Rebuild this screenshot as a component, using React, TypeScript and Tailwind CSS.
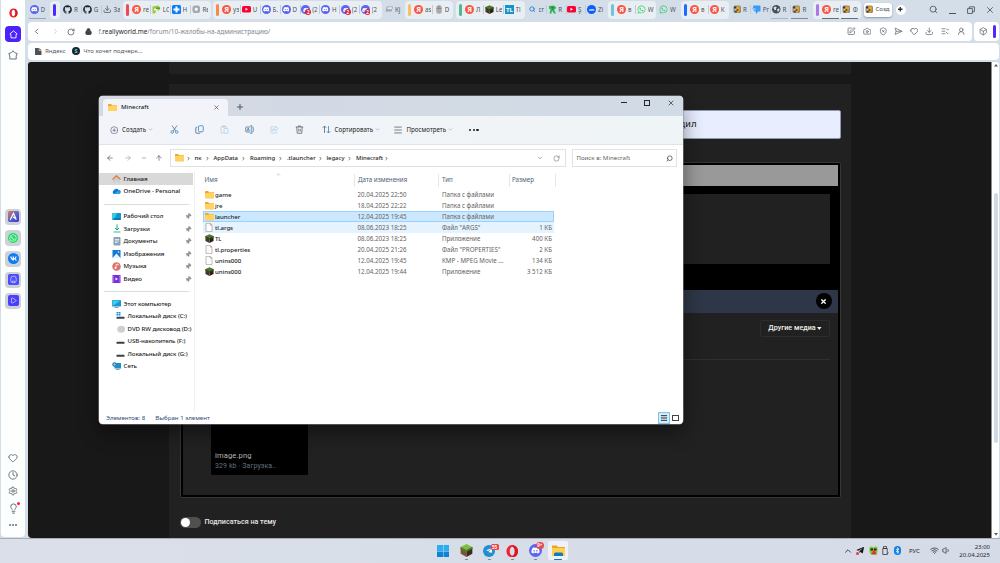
import React from "react";
import {
  ArrowLeft, ArrowRight, ArrowUp, Box, Camera, ChevronDown, ChevronLeft, ChevronRight, ChevronUp,
  CirclePlus, Clock, Download, Heart, Lightbulb, ListChecks, Lock, Menu, Pin, Play, RotateCw,
  Search, SendHorizontal, Settings, ShieldX, SquarePen, UserRound, Volume1, Wifi, X,
} from "lucide-react";
import { FaBluetoothB, FaDiscord, FaGithub, FaTelegramPlane, FaVk, FaWhatsapp } from "react-icons/fa";

/* ---------- small drawings ---------- */

const Cube = ({ cls = "size-[9px]" }: { cls?: string }) => (
  <svg viewBox="0 0 12 12" className={cls}>
    <path d="M6 0 11.4 2.8 6 5.6.6 2.8Z" fill="#7cc043" />
    <path d="M.6 2.8 6 5.6V12L.6 9Z" fill="#7a5436" />
    <path d="M11.4 2.8 6 5.6V12l5.4-3Z" fill="#3f2a1c" />
    <path d="M.6 2.8 6 5.6v2L4.5 6 3 6.3 2 4.8l-1.4.4ZM11.4 2.8 6 5.6v2L7.6 6l1.6-.2.8-1.3 1.4.3Z" fill="#4c8a28" />
  </svg>
);

const DarkCube = ({ cls = "size-[9px]" }: { cls?: string }) => (
  <svg viewBox="0 0 12 12" className={cls}>
    <path d="M6 .3 11.4 2.6 6 5.4.6 2.6Z" fill="#4a7a2c" />
    <path d="M.6 2.6 6 5.4V12L.6 9.2Z" fill="#4a3424" />
    <path d="M11.4 2.6 6 5.4V12l5.4-2.8Z" fill="#2c1e16" />
    <path d="M.6 2.6 6 5.4v2L4 5.6 3 6.3.6 4.6ZM11.4 2.6 6 5.4v2L8 5.6l1 .7 2.4-1.7Z" fill="#30521d" />
  </svg>
);

const Folder = ({ cls = "h-[7.500px] w-[9px]" }: { cls?: string }) => (
  <svg viewBox="0 0 18 15" className={cls}>
    <path d="M0 1.5Q0 0 1.5 0H6l2 2h8.5Q18 2 18 3.5V13q0 1.5-1.5 1.5h-15Q0 14.500 0 13Z" fill="#e9a92d" />
    <path d="M0 5.500Q0 4 1.500 4H7l1.500-1.500h8Q18 2.500 18 4v9q0 1.500-1.500 1.500h-15Q0 14.500 0 13Z" fill="#ffd262" />
  </svg>
);

const Doc = () => (
  <svg viewBox="0 0 16 18" className="h-[9px] w-[8px]">
    <path d="M2 .7h8.500L14 4.200v13H2Z" fill="#fdfdfd" stroke="#8e8e8e" strokeWidth="1.200" />
    <path d="M10.500.7v3.500H14" fill="none" stroke="#8e8e8e" strokeWidth="1.200" />
  </svg>
);

const OperaMark = ({ cls }: { cls: string }) => (
  <svg viewBox="0 0 20 20" className={cls}>
    <path fillRule="evenodd" d="M10 0c5.500 0 9.300 4.500 9.300 10S15.500 20 10 20 .7 15.500.7 10 4.500 0 10 0Zm0 2.800c-2.500 0-4 3.500-4 7.200s1.500 7.200 4 7.200 4-3.500 4-7.200-1.500-7.200-4-7.200Z" fill="#f5202f" />
    <path d="M13 1.200c4 1.300 6.300 4.800 6.300 8.800s-2.300 7.500-6.300 8.800c-1.500.4-3-.2-4-1.300 3 .5 5-3.500 5-7.500s-2-8-5-7.500c1-1.100 2.500-1.700 4-1.300Z" fill="#b8101f" opacity=".5" />
  </svg>
);

const Ya = () => (
  <span className="flex size-[9px] items-center justify-center rounded-full bg-[#fc5442] text-[7px] font-bold leading-none text-white">Я</span>
);
const Disc = () => (
  <span className="flex size-[9px] items-center justify-center rounded-full bg-[#5865f2]">
    <FaDiscord className="size-[6.500px] text-white" />
  </span>
);
const DiscRed = () => (
  <span className="relative flex size-[9px] items-center justify-center rounded-full bg-[#5865f2]">
    <FaDiscord className="size-[6px] text-white" />
    <span className="absolute -bottom-[0.500px] -right-[0.500px] flex size-[5.500px] items-center justify-center rounded-full bg-[#d9213b] text-[4.500px] font-bold leading-none text-white">2</span>
  </span>
);
const Tube = () => (
  <svg viewBox="0 0 18 13" className="h-[6.500px] w-[9px]">
    <rect width="18" height="13" rx="3" fill="#fb0033" />
    <path d="m7 3.500 5 3-5 3Z" fill="#fff" />
  </svg>
);
const Bee = () => (
  <svg viewBox="0 0 16 16" className="size-[8.500px]">
    <rect x="1" y="1" width="14" height="14" rx="3" fill="#8d857c" />
    <path d="M6 3h7v6l-2 5H6Z" fill="#e9a424" />
    <path d="M2 3h4v3H2ZM7 8h3v3H7ZM4 11h3v3H4Z" fill="#3b3636" />
    <path d="M3 8h3v2H3Z" fill="#e8e2d8" />
  </svg>
);
const Mouse = () => (
  <svg viewBox="0 0 12 18" className="h-[9px] w-[6px]">
    <rect x=".5" y=".5" width="11" height="17" rx="5" fill="#a9a9a9" />
    <path d="M6 1v6M1 7h10" stroke="#6f6f6f" />
  </svg>
);
const Roblox = () => (
  <svg viewBox="0 0 18 18" className="size-[9px]">
    <path d="M2 2l9-1 5 3-1 4-3 1 4 8h-4l-4-6-1 6H3l2-8-3-2Z" fill="#2fb457" />
    <path d="M7 5h4M8 8h3" stroke="#136b31" strokeWidth="1.500" />
  </svg>
);
const Zoomy = () => (
  <span className="flex size-[9px] items-center justify-center rounded-full bg-[#0b5cff] text-[3.500px] font-bold leading-none text-white">zm</span>
);
const Whats = () => <FaWhatsapp className="size-[9px] text-[#2fcf63]" />;
const GlobeDark = () => (
  <svg viewBox="0 0 18 18" className="size-[8.500px]">
    <circle cx="9" cy="9" r="9" fill="#47505a" />
    <path d="M3 6l4-3 3 2-2 3 1 2-3 1ZM11 9l4-2 1 4-4 4Z" fill="#dfe5ea" />
  </svg>
);
const Drop = () => (
  <svg viewBox="0 0 18 18" className="size-[9px]">
    <path d="M3 1h13q1 0 1 1v10q0 1-1 1h-4l-3 5-2-5-3-1-1-3-2-1Z" fill="#389bf5" />
    <path d="M1 6h6v5H5Z" fill="#7cc4ff" />
  </svg>
);

/* ---------- browser tabs ---------- */

type Tab = { icon: React.ReactNode; text: string; line?: string };
type Group = { box: string; bar?: string; tabs: Tab[] };

const groups: Group[] = [
  { box: "w-[21px] pl-[0.500px]", tabs: [{ icon: <Disc />, text: "D", line: "bg-[#9aa6b3]" }] },
  { box: "w-[10px] bg-[#e9eef3]", bar: "bg-[#5028ff]", tabs: [] },
  { box: "w-[63px] pl-[3px]", tabs: [
    { icon: <FaGithub className="size-[9px] text-[#1d2329]" />, text: "R" },
    { icon: <FaGithub className="size-[9px] text-[#1d2329]" />, text: "G" },
    { icon: <Download className="size-[8.500px] text-[#444b52]" />, text: "За" },
  ] },
  { box: "w-[88px] bg-[#e9eef3]", bar: "bg-[#ec4a5c]", tabs: [
    { icon: <Ya />, text: "re" },
    { icon: <svg viewBox="0 0 18 18" className="size-[9px]"><path d="M1 3 13 1l4 5-3 5H9l-3 6H1Z" fill="#9acb3c" /><path d="M4 7h7v4H4Z" fill="#f4f7ee" /><path d="M8 5h8v3H8Z" fill="#5f9a2a" /></svg>, text: "LC" },
    { icon: <svg viewBox="0 0 18 18" className="size-[9px]"><rect width="18" height="18" rx="3" fill="#0a7cf5" /><path d="M7 3h4v4h4v4h-4v4H7v-4H3V7h4Z" fill="#fff" /></svg>, text: "Н" },
    { icon: <svg viewBox="0 0 18 18" className="size-[8.500px]"><rect x="1" y="1" width="16" height="16" rx="5" fill="#a3abb5" /><rect x="5" y="5" width="8" height="8" rx="2" fill="#f3f4f6" stroke="#6f7782" /></svg>, text: "Re" },
  ] },
  { box: "w-[169px] bg-[#e9eef3] ml-[2px]", bar: "bg-[#f28b4b]", tabs: [
    { icon: <Ya />, text: "уз" },
    { icon: <Tube />, text: "U" },
    { icon: <Disc />, text: "Б." },
    { icon: <Disc />, text: "D" },
    { icon: <DiscRed />, text: "(2" },
    { icon: <Disc />, text: "H" },
    { icon: <DiscRed />, text: "(2" },
    { icon: <DiscRed />, text: "(2" },
  ] },
  { box: "w-[22px] pl-[2px]", tabs: [{ icon: <svg viewBox="0 0 18 18" className="size-[8.500px]"><path d="M4 3h13l-3 11H1Z" fill="#9ea7ae" /><path d="M6 5h9l-1 4H5Z" fill="#e8edf0" /></svg>, text: "Кj" }] },
  { box: "w-[48px] bg-[#e9eef3] ml-[1px]", bar: "bg-[#f3c168]", tabs: [{ icon: <Ya />, text: "as" }, { icon: <Mouse />, text: "D" }] },
  { box: "w-[69px] bg-[#e9eef3] ml-[3px]", bar: "bg-[#4cba8c]", tabs: [
    { icon: <Ya />, text: "Л" },
    { icon: <DarkCube />, text: "Le" },
    { icon: <span className="flex h-[8.500px] w-[9px] items-center justify-center bg-[#1495c8] text-[6px] font-bold leading-none text-white">TL</span>, text: "Tl" },
  ] },
  { box: "w-[82px] pl-[1.500px] ml-[1px]", tabs: [
    { icon: <Search className="size-[6.500px] text-[#1d75d8]" strokeWidth={3} />, text: "cr" },
    { icon: <Roblox />, text: "R" },
    { icon: <Tube />, text: "Ş" },
    { icon: <Zoomy />, text: "Zi" },
  ] },
  { box: "w-[48px] bg-[#e9eef3]", bar: "bg-[#6cc5dc]", tabs: [{ icon: <Ya />, text: "в" }, { icon: <Whats />, text: "W" }] },
  { box: "w-[24px] pl-[3px]", tabs: [{ icon: <Whats />, text: "W" }] },
  { box: "w-[48px] bg-[#e9eef3] ml-[1px]", bar: "bg-[#1c6cff]", tabs: [{ icon: <Ya />, text: "в" }, { icon: <Ya />, text: "К" }] },
  { box: "w-[83px] pl-[3px]", tabs: [
    { icon: <Bee />, text: "R" },
    { icon: <Drop />, text: "Pr" },
    { icon: <GlobeDark />, text: "R", line: "bg-[#a9b5c1]" },
    { icon: <Bee />, text: "R", line: "bg-[#7d8a99]" },
  ] },
  { box: "w-[48px] bg-[#e9eef3] ml-[1px]", bar: "bg-[#ab79e6]", tabs: [
    { icon: <Ya />, text: "re", line: "bg-[#66707d]" },
    { icon: <Bee />, text: "Ф", line: "bg-[#66707d]" },
  ] },
];

const TabStrip = () => (
  <div className="flex h-[21px] items-start pl-[0.500px] pt-[0.500px] text-[6.200px] text-[#4b535c]">
    {groups.map((g, i) => (
      <div key={i} className={"flex h-[18px] shrink-0 items-center rounded-[4px] " + g.box}>
        {g.bar && <span className={"ml-[3.500px] mr-[2.500px] h-[12px] w-[3px] shrink-0 rounded-full " + g.bar} />}
        {g.tabs.map((t, j) => (
          <div key={j} className="relative flex h-full w-[19.800px] shrink-0 items-center">
            {j > 0 && <span className="absolute -left-px h-[9px] w-px bg-[#c3ccd5]" />}
            <span className="ml-[0.500px] flex w-[9.500px] shrink-0 items-center justify-center">{t.icon}</span>
            <span className="ml-[1.500px] w-[6px] overflow-hidden whitespace-nowrap leading-[9px]">{t.text}</span>
            {t.line && <span className={"absolute bottom-0 left-0 h-px w-[17px] " + t.line} />}
          </div>
        ))}
      </div>
    ))}
    <div className="ml-[3px] mt-[2px] flex h-[14px] w-[28px] shrink-0 items-center rounded-[3px] bg-white pl-[1.500px] shadow-[0_1px_2px_#8d99a5]">
      <Bee />
      <span className="ml-[2px] w-[14px] whitespace-nowrap text-[6px] leading-[9px]">Созд</span>
    </div>
    <span className="ml-[4px] mt-[4px] flex size-[10px] shrink-0 items-center justify-center rounded-full bg-white text-[#333]">
      <svg viewBox="0 0 10 10" className="size-[4.500px]" stroke="currentColor" strokeWidth="3"><path d="M5 0v10M0 5h10" /></svg>
    </span>
    <div className="ml-auto mr-[5px] mt-[4px] flex items-center text-[#4b545c]">
      <Search className="size-[9px]" strokeWidth={2.200} />
      <span className="ml-[11px] mt-[7px] h-px w-[7px] bg-[#4b545c]" />
      <svg viewBox="0 0 14 14" className="ml-[11px] size-[8px]" fill="none" stroke="currentColor" strokeWidth="1.500"><path d="M1 4.500h8.500V13H1ZM4 4.500V1.500h9V10H9.500" /></svg>
      <X className="ml-[10px] size-[10px]" strokeWidth={2} />
    </div>
  </div>
);

/* ---------- browser chrome ---------- */

const SideTile = ({ children }: { children: React.ReactNode }) => (
  <span className="flex size-[16px] items-center justify-center rounded-[4px] bg-[#cdd2d6]">{children}</span>
);

const SideBar = () => (
  <div className="ml-px mr-[3px] flex h-[537px] w-[24px] shrink-0 flex-col items-center rounded-b-[4px] bg-[#fdfefe] text-[#5a636b]">
    <div className="mt-[8px]"><OperaMark cls="h-[10px] w-[9px]" /></div>
    <div className="mt-[8px] flex size-[16px] items-center justify-center rounded-[4px] bg-[#4c22fb] text-white">
      <svg viewBox="0 0 16 16" className="size-[9px]" fill="none" stroke="currentColor" strokeWidth="1.600"><path d="M1.500 7 8 1.500 14.500 7l-2 1v6h-9V8Z" strokeLinejoin="round" /></svg>
    </div>
    <svg viewBox="0 0 20 20" className="mt-[7.500px] size-[10px]" fill="none" stroke="currentColor" strokeWidth="1.800" strokeLinejoin="round"><path d="m10 1.500 3 3.700 5.500 2-2.200 4.800.2 6H3.500l.2-6L1.500 7.200l5.500-2Z" /></svg>
    <div className="mt-[149px] flex flex-col gap-[5px]">
      <SideTile>
        <svg viewBox="0 0 20 20" className="size-[11px]">
          <defs><linearGradient id="aria" x1="0" y1="0" x2="1" y2="1"><stop offset="0" stopColor="#f0744f" /><stop offset=".5" stopColor="#5b63c9" /><stop offset="1" stopColor="#3b33d6" /></linearGradient></defs>
          <rect width="20" height="20" rx="3" fill="url(#aria)" />
          <path d="m4 16 6-12 5 12M9 11l4 2" fill="none" stroke="#fff" strokeWidth="2.200" />
        </svg>
      </SideTile>
      <SideTile><span className="flex size-[10px] items-center justify-center rounded-full bg-[#21db66]"><FaWhatsapp className="size-[8px] text-white" /></span></SideTile>
      <SideTile><span className="flex size-[11px] items-center justify-center rounded-full bg-[#0f7cf7]"><FaVk className="size-[7px] text-white" /></span></SideTile>
      <SideTile>
        <svg viewBox="0 0 20 20" className="size-[11px]">
          <rect width="20" height="20" rx="3" fill="#4d4dfb" />
          <rect x="5" y="4" width="10" height="12" rx="4.500" fill="none" stroke="#cfc9ff" strokeWidth="1.400" />
          <path d="M8 9h.5m3 0h.5M8 16v-3h4v3" fill="none" stroke="#cfc9ff" strokeWidth="1.400" />
        </svg>
      </SideTile>
      <SideTile><span className="flex size-[11px] items-center justify-center rounded-[2px] bg-[#4a40fb]"><Play className="size-[7px] text-[#d8d4ff]" strokeWidth={2.500} /></span></SideTile>
    </div>
    <div className="mt-auto flex flex-col items-center gap-[6.800px]">
      <Heart className="size-[10px]" strokeWidth={2} />
      <Clock className="size-[10px]" strokeWidth={2} />
      <Settings className="size-[10px]" strokeWidth={2} />
      <span className="relative">
        <Lightbulb className="size-[11px]" strokeWidth={2} />
        <span className="absolute -right-[1px] -top-[1px] size-[3px] rounded-full bg-[#ff1840]" />
      </span>
      <span className="mb-[11px] mt-[3px] flex gap-[1.300px]">
        <i className="size-[2px] bg-[#8b9298]" /><i className="size-[2px] bg-[#8b9298]" /><i className="size-[2px] bg-[#8b9298]" />
      </span>
    </div>
  </div>
);

const AddressBar = () => (
  <div className="mt-px flex h-[19px] gap-[2px] pr-px">
    <div className="flex w-[944px] items-center rounded-[4px] bg-white text-[#59616a]">
      <ChevronLeft className="ml-[4px] size-[9px]" strokeWidth={2.200} />
      <ChevronRight className="ml-[9.500px] size-[9px] text-[#c9ced3]" strokeWidth={2.200} />
      <RotateCw className="ml-[7.500px] size-[8px]" strokeWidth={2.400} />
      <Lock className="ml-[10px] size-[7px] text-[#3b4249]" fill="currentColor" strokeWidth={3} />
      <span className="ml-[6.500px] whitespace-nowrap pt-[1.500px] text-[6.440px] leading-none text-[#7f8890]">f.<span className="text-[#24292e]">reallyworld.me</span>/forum/10-жалобы-на-администрацию/</span>
      <div className="ml-auto mr-[7px] flex items-center gap-[7.100px]">
        <SquarePen className="size-[8.500px]" />
        <Camera className="size-[8.500px]" />
        <ShieldX className="size-[8.500px]" />
        <SendHorizontal className="size-[8.500px]" />
        <Heart className="size-[8.500px]" strokeWidth={2.300} />
        <Download className="size-[8.500px]" />
        <ListChecks className="size-[8.500px] -scale-x-100" />
        <UserRound className="size-[8.500px]" />
      </div>
    </div>
    <div className="flex flex-1 items-center rounded-[4px] bg-white">
      <Box className="ml-[4.500px] size-[8.500px] text-[#59616a]" />
      <span className="ml-[6px] h-[13px] w-[3px] rounded-full bg-[#5028ff]" />
    </div>
  </div>
);

const Bookmarks = () => (
  <div className="mr-px mt-[1.500px] flex h-[17.500px] items-center rounded-[4px] bg-white pl-[7px] text-[6.050px] leading-none text-[#50585f]">
    <svg viewBox="0 0 12 14" className="h-[7.500px] w-[6.500px]"><path d="M0 0h7v5h5v9H0Z" fill="#4b5259" /><path d="m8 0 4 4H8Z" fill="#4b5259" /></svg>
    <span className="ml-[3.500px] w-[20.500px] whitespace-nowrap pt-[0.500px]">Яндекс</span>
    <span className="ml-[6.500px] flex size-[8px] items-center justify-center rounded-full bg-[#13282e] text-[5.500px] font-bold text-[#7fd4d8]">S</span>
    <span className="ml-[3.500px] whitespace-nowrap pt-[0.500px]">Что хочет подчерк...</span>
  </div>
);

/* ---------- forum page ---------- */

const ForumPage = () => (
  <div className="flex h-[475.500px] flex-1 overflow-hidden rounded-bl-[4px] rounded-tl-[3px] bg-[#181818] pl-[141px]">
    <div className="flex w-[682px] flex-col">
      <div className="h-[11.500px] bg-[#212121]" />
      <div className="mt-[10.500px] flex flex-1 flex-col bg-[#212121] pl-[11px] pr-[10px] pt-[26px]">
        <div className="flex h-[28.500px] shrink-0 items-center rounded-[2px] border border-[#8f98a8] bg-[#e8eeff] pl-[467.500px] text-[9.700px] text-[#2b2b2b] [font-family:Roboto,sans-serif]">
          <span className="w-[48px] text-right">убедил</span>
        </div>
        <div className="mt-[23px] flex h-[336px] shrink-0 flex-col rounded-[2px] border border-[#343638] bg-black p-[2px]">
          <div className="h-[21px] shrink-0 bg-[#999999]" />
          <div className="mx-[8px] mt-[8px] h-[70px] shrink-0 bg-[#212121]" />
          <div className="mt-[26px] flex h-[23px] shrink-0 items-center justify-end bg-[#2e3747] pr-[6.500px]">
            <span className="flex size-[16px] items-center justify-center rounded-full bg-black"><X className="size-[7px] text-white" strokeWidth={4.500} /></span>
          </div>
          <div className="flex flex-1 flex-col bg-[#212121] px-[8px] pt-[7px]">
            <div className="flex justify-end border-b border-[#303030] pb-[22px]">
              <span className="flex h-[17px] w-[70px] items-center justify-center gap-[1.500px] whitespace-nowrap rounded-[2px] border border-[#2d2d2d] pt-[1px] text-[7.200px] font-medium text-[#f0f0f0] [font-family:Roboto,sans-serif]">
                Другие медиа
                <svg viewBox="0 0 8 5" className="h-[3px] w-[4.500px]"><path d="M0 0h8L4 5Z" fill="#f0f0f0" /></svg>
              </span>
            </div>
            <div className="ml-[20px] mt-[18px] flex h-[97px] w-[97px] flex-col justify-end gap-[2px] rounded-[1px] bg-black pb-[4.500px] pl-[4px] text-[7.600px] leading-[8px] tracking-[0.100px] [font-family:Roboto,sans-serif]">
              <span className="text-[#b5b5b5]">image.png</span>
              <span className="text-[7px] text-[#61707f]">329 kb · Загрузка..</span>
            </div>
          </div>
        </div>
        <div className="mt-[19.500px] flex items-center">
          <span className="flex h-[11px] w-[21px] items-center rounded-full bg-[#505050] pl-[0.500px]"><i className="size-[9px] rounded-full bg-white" /></span>
          <span className="ml-[3.500px] whitespace-nowrap text-[7.150px] font-medium text-[#e6e6e6] [font-family:Roboto,sans-serif]">Подписаться на тему</span>
        </div>
      </div>
    </div>
  </div>
);

const ScrollBar = () => (
  <div className="mr-px flex h-[475.500px] w-[8px] flex-col items-center rounded-r-[3px] border-l border-[#8c8c8c] bg-white">
    <svg viewBox="0 0 8 5" className="mt-[2px] h-[2.500px] w-[4px]"><path d="m0 5 4-5 4 5Z" fill="#555" /></svg>
    <span className="mt-[126px] h-[250px] w-[4px] rounded-full bg-[#d0dae4]" />
    <svg viewBox="0 0 8 5" className="mb-[2px] mt-auto h-[2.500px] w-[4px]"><path d="m0 0 4 5 4-5Z" fill="#555" /></svg>
  </div>
);

/* ---------- file explorer ---------- */

const MonitorIcon = () => (
  <svg viewBox="0 0 18 16" className="h-[8px] w-[9px]"><rect width="18" height="13" rx="1" fill="#1b95cf" /><path d="M1 1h16L1 12Z" fill="#3fd0e8" /><path d="M5 15h8" stroke="#6c7a84" strokeWidth="1.500" /></svg>
);
const Drive = ({ sys = false }: { sys?: boolean }) => (
  <svg viewBox="0 0 18 16" className="h-[8px] w-[9px]">
    {sys && <path d="M1 0h3.500v3H1ZM5.500 0H9v3H5.500ZM1 4h3.500v3H1ZM5.500 4H9v3H5.500Z" fill="#1488d8" />}
    <path d="M3 8h12l2 2H1Z" fill="#c8cbce" /><rect x="1" y="10" width="16" height="3.500" fill="#3c4146" />
  </svg>
);

type NavItem = { icon: React.ReactNode; text: string; row?: string; pin?: boolean };
const quick: NavItem[] = [
  { icon: <svg viewBox="0 0 18 14" className="h-[7px] w-[9px]"><rect width="18" height="14" rx="1" fill="#1295cf" /><path d="M0 0h10L4 14H0Z" fill="#35cce4" /><path d="M2 11h14v2H2Z" fill="#0b5f94" /></svg>, text: "Рабочий стол", pin: true },
  { icon: <svg viewBox="0 0 16 18" className="h-[9px] w-[8px]" fill="none" stroke="#18a98a" strokeWidth="2"><path d="M8 1v11M4 8l4 4 4-4" /><path d="M1 16h14" stroke="#3fb79d" /></svg>, text: "Загрузки", pin: true },
  { icon: <svg viewBox="0 0 16 18" className="h-[9px] w-[8px]"><rect x="1" width="14" height="17" rx="2" fill="#8aa3bd" /><path d="M4 5h8M4 8h8M4 11h5" stroke="#fff" strokeWidth="1.500" /></svg>, text: "Документы", pin: true },
  { icon: <svg viewBox="0 0 18 16" className="h-[8px] w-[9px]"><rect x="1" width="16" height="16" rx="1" fill="#1878cf" /><path d="m1 16 8-9 8 9Z" fill="#e6f4ff" /><circle cx="13" cy="4" r="1.500" fill="#fff" /></svg>, text: "Изображения", pin: true },
  { icon: <svg viewBox="0 0 18 18" className="size-[9px]"><circle cx="9" cy="9" r="8.500" fill="#d9726c" /><path d="M8 12V5l4-1v3" fill="none" stroke="#fff" strokeWidth="1.500" /><circle cx="6.800" cy="12" r="1.900" fill="#fff" /></svg>, text: "Музыка", pin: true },
  { icon: <svg viewBox="0 0 18 16" className="h-[8px] w-[9px]"><rect x="1" width="16" height="16" rx="1" fill="#7a2ed6" /><path d="m7 5 5 3-5 3Z" fill="#fff" /><path d="M3 2v12M15 2v12" stroke="#c9a4ff" strokeWidth="1.500" strokeDasharray="2 1.500" /></svg>, text: "Видео", pin: true },
];
const places: NavItem[] = [
  { icon: <MonitorIcon />, text: "Этот компьютер" },
  { icon: <Drive sys />, text: "Локальный диск (C:)", row: "ml-[4px]" },
  { icon: <svg viewBox="0 0 18 18" className="size-[8.500px]"><ellipse cx="9" cy="9" rx="8.500" ry="7.500" fill="#cfd0d1" /><circle cx="9" cy="9" r="2" fill="#fff" stroke="#a5a5a5" /></svg>, text: "DVD RW дисковод (D:)", row: "ml-[4px]" },
  { icon: <Drive />, text: "USB-накопитель (F:)", row: "ml-[4px]" },
  { icon: <Drive />, text: "Локальный диск (G:)", row: "ml-[4px]" },
  { icon: <svg viewBox="0 0 18 16" className="h-[8px] w-[9px]"><path d="M5 2h13v11H5Z" fill="#1d90cc" /><circle cx="5" cy="5" r="4.500" fill="#2f7fa8" /><path d="M2 5h6M5 2v6" stroke="#a9dcef" /><path d="M8 15h7" stroke="#6c7a84" strokeWidth="1.500" /></svg>, text: "Сеть" },
];

const NavRow = ({ item }: { item: NavItem }) => (
  <div className="flex h-[12.500px] items-center overflow-hidden pl-[12.800px] text-[6.100px] font-medium tracking-[-0.080px]">
    <span className={"flex w-[10px] shrink-0 justify-center " + (item.row ?? "")}>{item.icon}</span>
    <span className="ml-[1.800px] whitespace-nowrap">{item.text}</span>
    {item.pin && <Pin className="ml-auto mr-[2px] size-[6.500px] shrink-0 rotate-45 text-[#8a9197]" fill="currentColor" />}
  </div>
);

const files = [
  { icon: "folder", name: "game", date: "20.04.2025 22:50", type: "Папка с файлами", size: "", row: "border-transparent" },
  { icon: "folder", name: "jre", date: "18.04.2025 22:22", type: "Папка с файлами", size: "", row: "border-transparent" },
  { icon: "folder", name: "launcher", date: "12.04.2025 19:45", type: "Папка с файлами", size: "", row: "border-[#99d1ff] bg-[#cce8ff]" },
  { icon: "doc", name: "tl.args", date: "08.06.2023 18:25", type: "Файл \"ARGS\"", size: "1 КБ", row: "border-[#e5f3ff] bg-[#e5f3ff]" },
  { icon: "cube", name: "TL", date: "08.06.2023 18:25", type: "Приложение", size: "400 КБ", row: "border-transparent" },
  { icon: "doc", name: "tl.properties", date: "20.04.2025 21:26", type: "Файл \"PROPERTIES\"", size: "2 КБ", row: "border-transparent" },
  { icon: "doc", name: "unins000", date: "12.04.2025 19:45", type: "KMP - MPEG Movie ...", size: "134 КБ", row: "border-transparent" },
  { icon: "cube", name: "unins000", date: "12.04.2025 19:44", type: "Приложение", size: "3 512 КБ", row: "border-transparent" },
];

const crumbs = [
  { name: "пк", cls: "w-[19px]" },
  { name: "AppData", cls: "w-[36.500px]" },
  { name: "Roaming", cls: "w-[37px]" },
  { name: ".tlauncher", cls: "w-[39.500px]" },
  { name: "legacy", cls: "w-[29.500px]" },
  { name: "Minecraft", cls: "w-[37px]" },
];

const Divider = () => <span className="h-[16px] w-px bg-[#e1e3e8]" />;
const Caret = () => <ChevronDown className="size-[5px] text-[#8a8f94]" strokeWidth={2.500} />;

/* toolbar drawings: dark outline with a blue accent */
const CutIcon = () => (
  <svg viewBox="0 0 18 18" className="size-[9px]" fill="none" strokeWidth="1.500"><path d="m4 1 7.500 11M14 1 6.500 12" stroke="#5d6369" /><circle cx="4.500" cy="14" r="2.600" stroke="#2a86d1" /><circle cx="13.500" cy="14" r="2.600" stroke="#2a86d1" /></svg>
);
const CopyIcon = () => (
  <svg viewBox="0 0 18 18" className="size-[9px]" fill="none" strokeWidth="1.600"><rect x="7" y="1.500" width="9.500" height="12" rx="2" stroke="#2a86d1" /><path d="M4.500 4.500H3q-1.500 0-1.500 1.500v8.500q0 2 2 2H9q1.500 0 1.500-1" stroke="#5d6369" /></svg>
);
const PasteIcon = () => (
  <svg viewBox="0 0 18 18" className="size-[9px]" fill="none" strokeWidth="1.500"><path d="M7 16H3q-1 0-1-1V4q0-1 1-1h9q1 0 1 1v2M5.500 1.500h4v3h-4Z" stroke="#c5c9cd" /><rect x="8" y="7" width="8" height="9.500" rx="1" stroke="#a8cfee" /></svg>
);
const RenameIcon = () => (
  <svg viewBox="0 0 18 18" className="size-[9px]" fill="none" strokeWidth="1.500"><path d="M10 14H3q-1.500 0-1.500-1.500v-7Q1.500 4 3 4h7M14.500 4q2 0 2 1.500v7q0 1.500-2 1.500" stroke="#5d6369" /><path d="M12.500 1.500v15M10.500 1.500h4M10.500 16.500h4M4 12l2.500-6L9 12M5 10h3" stroke="#2a86d1" /></svg>
);
const ShareIcon = () => (
  <svg viewBox="0 0 18 18" className="size-[9px]" fill="none" strokeWidth="1.500"><path d="M7 3H4Q2 3 2 5v9q0 2 2 2h8q2 0 2-2v-1" stroke="#c5c9cd" /><path d="M11 2.500 16.500 7 11 11.500V9q-4 0-6 3 .500-6.500 6-7Z" stroke="#a8cfee" strokeLinejoin="round" /></svg>
);
const BinIcon = () => (
  <svg viewBox="0 0 18 18" className="size-[9px]" fill="none" stroke="#565b60" strokeWidth="1.500"><path d="M1.500 4h15M6.500 4V2h5v2M3.500 4l1 12.500h9l1-12.500M7.500 7.500v5.500M10.500 7.500v5.500" /></svg>
);
const SortIcon = () => (
  <svg viewBox="0 0 18 18" className="size-[9px]" fill="none" strokeWidth="1.600"><path d="M5 16V2M1.500 5.500 5 2l3.500 3.500" stroke="#5d6369" /><path d="M13 2v14M9.500 12.500 13 16l3.500-3.500" stroke="#2a86d1" /></svg>
);

const Explorer = () => (
  <div className="absolute left-[99px] top-[96px] flex h-[328px] w-[584px] flex-col overflow-hidden rounded-[4px] bg-white text-[6.200px] leading-none text-[#1c1c1c] shadow-[0_0_0_0.500px_#8d9096,0_8px_20px_rgba(0,0,0,0.45)]">
    <div className="flex h-[20px] shrink-0 items-start bg-gradient-to-r from-[#d5d9e4] to-[#d1dbe5]">
      <div className="ml-[3.500px] mt-[3px] flex h-[17px] w-[125px] items-center rounded-t-[4px] bg-[#f2f4f9] pb-[0.500px] pl-[5px]">
        <Folder />
        <span className="ml-[4.500px] text-[6.100px] font-medium tracking-[-0.030px]">Minecraft</span>
        <X className="ml-auto mr-[7.500px] size-[7px] text-[#333]" strokeWidth={2} />
      </div>
      <span className="ml-[9.500px] mt-[8px]"><svg viewBox="0 0 10 10" className="size-[6px]" stroke="#444" strokeWidth="1.400"><path d="M5 0v10M0 5h10" /></svg></span>
      <div className="ml-auto mr-[8px] mt-[2.500px] flex items-center gap-[17px] text-[#23272b]">
        <span className="h-px w-[6px] bg-[#23272b]" />
        <span className="size-[6px] border border-[#23272b]" />
        <X className="size-[8px]" strokeWidth={2} />
      </div>
    </div>
    <div className="flex h-[29px] shrink-0 items-center border-b border-[#e0e3e8] bg-gradient-to-r from-[#f2f4f9] to-[#eff4f6] pl-[10.500px] pb-[0.500px]">
      <CirclePlus className="size-[8.500px] text-[#55606c]" strokeWidth={1.800} />
      <span className="ml-[4px] w-[24px] pt-[1px]">Создать</span>
      <span className="ml-[2px]"><Caret /></span>
      <span className="ml-[7px]"><Divider /></span>
      <span className="ml-[10px] flex gap-[16px]">
        <CutIcon /><CopyIcon /><PasteIcon /><RenameIcon /><ShareIcon /><BinIcon />
      </span>
      <span className="ml-[9px]"><Divider /></span>
      <span className="ml-[8.500px]"><SortIcon /></span>
      <span className="ml-[4px] w-[39px] whitespace-nowrap pt-[1px]">Сортировать</span>
      <span className="ml-[1.500px]"><Caret /></span>
      <Menu className="ml-[13px] size-[10px] text-[#55595e]" strokeWidth={1.800} />
      <span className="ml-[3.500px] w-[39px] whitespace-nowrap pt-[1px]">Просмотреть</span>
      <span className="ml-[2.500px]"><Caret /></span>
      <span className="ml-[8px]"><Divider /></span>
      <span className="ml-[8px] flex gap-[1.500px]"><i className="size-[2.200px] rounded-full bg-[#222]" /><i className="size-[2.200px] rounded-full bg-[#222]" /><i className="size-[2.200px] rounded-full bg-[#222]" /></span>
    </div>
    <div className="flex h-[26px] shrink-0 items-center pl-[6.500px] pr-[6.500px] text-[#4d5257]">
      <ArrowLeft className="size-[8px]" strokeWidth={2} />
      <ArrowRight className="ml-[10px] size-[8px] text-[#9ba0a5]" strokeWidth={2} />
      <ChevronDown className="ml-[9px] size-[6px]" strokeWidth={2} />
      <ArrowUp className="ml-[8px] size-[8px]" strokeWidth={2} />
      <div className="ml-[7.500px] flex h-[18px] w-[396px] items-center border border-[#e2e2e2] pl-[4px] text-[#1c1c1c]">
        <Folder />
        <ChevronRight className="ml-[2px] size-[5px]" strokeWidth={3} />
        <div className="ml-[3.500px] flex items-center">
          {crumbs.map((c) => (
            <span key={c.name} className={"flex shrink-0 items-center justify-between whitespace-nowrap pr-[4px] text-[5.900px] font-medium " + c.cls}><span className="pt-[1px]">{c.name}</span><ChevronRight className="size-[5px] shrink-0" strokeWidth={3} /></span>
          ))}
        </div>
        <ChevronDown className="ml-auto size-[6px] text-[#555]" strokeWidth={2} />
        <RotateCw className="ml-[10px] mr-[5px] size-[7px] text-[#6d7277]" strokeWidth={2} />
      </div>
      <div className="ml-auto flex h-[18px] w-[105px] items-center border border-[#e2e2e2] pl-[4px]">
        <span className="pt-[0.500px] text-[6.100px] text-[#5f5f5f]">Поиск в: Minecraft</span>
        <Search className="ml-auto mr-[3px] size-[7px] -scale-x-100 text-[#3f4347]" strokeWidth={2.500} />
      </div>
    </div>
    <div className="flex min-h-0 flex-1">
      <div className="w-[95.500px] shrink-0 border-r border-[#f0f0f0] pt-[1.700px]">
        <div className="mr-[1px] bg-[#d9d9d9]"><NavRow item={{ icon: <svg viewBox="0 0 18 16" className="h-[8px] w-[9px]"><path d="M3 7v9h4v-5h4v5h4V7L9 2Z" fill="#c9ced3" /><path d="m1 9 8-7.500L17 9" fill="none" stroke="#e07a3a" strokeWidth="2.400" /></svg>, text: "Главная" }} /></div>
        <NavRow item={{ icon: <svg viewBox="0 0 18 12" className="h-[6px] w-[9px]"><path d="M4 12a4 4 0 0 1 0-7.500A5 5 0 0 1 13 4a4 4 0 0 1 1 8Z" fill="#0f78d4" /><path d="M4 12 13 5a4 4 0 0 1 1 7Z" fill="#28a8ea" /></svg>, text: "OneDrive - Personal" }} />
        <div className="mx-[4.500px] mb-[5.500px] mt-[6px] h-px bg-[#dcdcdc]" />
        {quick.map((n) => <NavRow key={n.text} item={n} />)}
        <div className="mx-[4.500px] mb-[5.500px] mt-[6px] h-px bg-[#dcdcdc]" />
        {places.map((n) => <NavRow key={n.text} item={n} />)}
      </div>
      <div className="relative flex flex-1 flex-col pl-[8.500px]">
        <ChevronUp className="absolute left-[81px] top-[0.500px] size-[5px] text-[#777]" strokeWidth={2} />
        <div className="flex h-[18.500px] items-center text-[#4c607a]">
          <span className="w-[151px] pl-[1.500px]">Имя</span>
          <span className="flex h-[13px] w-[84px] items-center border-l border-[#e6e6e6] pl-[3px]">Дата изменения</span>
          <span className="flex h-[13px] w-[71px] items-center border-l border-[#e6e6e6] pl-[3px]">Тип</span>
          <span className="flex h-[13px] w-[47px] items-center border-x border-[#e6e6e6] pl-[2px]">Размер</span>
        </div>
        {files.map((f, i) => (
          <div key={i} className={"flex h-[10.950px] w-[351px] shrink-0 items-center border text-[#636363] " + f.row}>
            <span className="flex w-[10px] justify-center">{f.icon === "folder" ? <Folder /> : f.icon === "doc" ? <Doc /> : <DarkCube />}</span>
            <span className="w-[143.500px] pl-[1px] pt-[0.500px] text-[6.100px] font-medium tracking-[-0.050px] text-[#1c1c1c]">{f.name}</span>
            <span className="w-[84.500px] pt-[0.500px]">{f.date}</span>
            <span className="w-[64px] whitespace-nowrap pt-[0.500px]">{f.type}</span>
            <span className="flex-1 whitespace-nowrap pr-[1px] pt-[0.500px] text-right">{f.size}</span>
          </div>
        ))}
      </div>
    </div>
    <div className="flex h-[12.500px] shrink-0 items-center pl-[7px] text-[6.100px] text-[#2d4a73]">
      <span className="mt-[1px] w-[49.500px] border-r border-[#f0f0f0]">Элементов: 8</span>
      <span className="mt-[1px]">Выбран 1 элемент</span>
      <span className="ml-auto flex size-[12px] items-center justify-center border border-[#7fc3e8] bg-[#d3ebf8]"><Menu className="size-[8px] text-[#333]" strokeWidth={3} /></span>
      <span className="ml-[2px] mr-[4.500px] h-[6px] w-[7px] border border-[#444]" />
    </div>
  </div>
);

/* ---------- taskbar ---------- */

const TaskIcon = ({ children, mark = "w-[3px] bg-[#7c828a]" }: { children: React.ReactNode; mark?: string }) => (
  <div className="relative flex h-[20px] w-[23px] items-center justify-center">
    {children}
    <span className={"absolute bottom-[0.500px] h-[1.500px] rounded-full " + mark} />
  </div>
);

const TaskBar = () => (
  <div className="flex h-[25px] items-center border-t border-[#a9adb3] bg-gradient-to-r from-[#dadfe9] to-[#d5dce7] pb-[0.500px]">
    <div className="ml-[431.600px] flex items-center">
      <TaskIcon mark="hidden">
        <svg viewBox="0 0 24 24" className="size-[12.500px]"><path d="M0 0h11.500v11.500H0ZM12.500 0H24v11.500H12.500Z" fill="#2aafee" /><path d="M0 12.500h11.500V24H0ZM12.500 12.500H24V24H12.500Z" fill="#0a84d8" /></svg>
      </TaskIcon>
      <TaskIcon><Cube cls="size-[13px]" /></TaskIcon>
      <TaskIcon>
        <span className="flex size-[12px] items-center justify-center rounded-full bg-[#1f8fd0]"><FaTelegramPlane className="size-[7px] text-white" /></span>
        <span className="absolute right-[2px] top-[3px] flex h-[6px] w-[8px] items-center justify-center rounded-[1.500px] bg-[#ef4444] text-[4.500px] font-bold leading-none text-white">55</span>
      </TaskIcon>
      <TaskIcon><OperaMark cls="size-[12.500px]" /></TaskIcon>
      <TaskIcon>
        <span className="flex size-[13px] items-center justify-center rounded-full bg-[#5865f2]"><FaDiscord className="size-[9px] text-white" /></span>
        <span className="absolute right-[3px] top-[1px] flex size-[7.500px] items-center justify-center rounded-full bg-[#e8484e] text-[4.500px] font-bold leading-none text-white">9+</span>
      </TaskIcon>
      <div className="flex w-[23px] justify-center">
        <div className="relative flex h-[19px] w-[20px] items-center justify-center rounded-[2px] bg-[#eef1f7]">
          <svg viewBox="0 0 26 24" className="h-[12px] w-[13px]"><path d="M0 1h9l3 3h14v18H0Z" fill="#e8a51f" /><path d="M0 6h26v16H0Z" fill="#ffd04d" /><path d="M4 22v-4q0-3 3-3h12q3 0 3 3v4Z" fill="#0f79c4" /></svg>
          <span className="absolute bottom-0 h-[1.500px] w-[8px] rounded-full bg-[#1272cc]" />
        </div>
      </div>
    </div>
    <div className="ml-auto mr-[10px] flex items-center text-[#26292d]">
      <ChevronUp className="size-[10px]" strokeWidth={2} />
      <span className="relative ml-[3.500px]"><FaTelegramPlane className="size-[8.500px] text-[#14171a]" /><i className="absolute bottom-0 left-0 size-[2.500px] rounded-full bg-[#ef3b3b]" /></span>
      <svg viewBox="0 0 18 18" className="ml-[4px] size-[9px]"><path d="M1 3q3-4 8 0 5-4 8 0v8q0 6-8 6T1 11Z" fill="#7fc832" /><path d="M3 5h5v4H3ZM10 5h5v4h-5Z" fill="#222" /><path d="m10 7 6 10H4Z" fill="#e5352b" /></svg>
      <svg viewBox="0 0 14 18" className="ml-[4px] h-[9px] w-[7px]" fill="none" stroke="#222" strokeWidth="1.400"><path d="M3 1h6v4H3ZM1.500 5h9v12h-9ZM10.500 16l3-3" /></svg>
      <span className="ml-[5px] flex h-[9px] w-[7px] items-center justify-center rounded-full bg-[#0a7fe6]"><FaBluetoothB className="size-[7px] text-white" /></span>
      <span className="ml-[8.500px] w-[12px] text-[6px] leading-none">РУС</span>
      <Wifi className="ml-[8.500px] size-[9px]" strokeWidth={2} />
      <Volume1 className="ml-[3px] size-[9px]" strokeWidth={1.800} />
      <div className="ml-[4.500px] flex w-[35px] flex-col items-end gap-[2.300px] text-[6px] leading-[6px]"><span>23:00</span><span>20.04.2025</span></div>
    </div>
  </div>
);

export default function App() {
  return (
    <div className="relative flex h-[563px] w-[1000px] flex-col overflow-hidden bg-[#d3dee8] [font-family:'Noto_Sans','Open_Sans',sans-serif]">
      <div className="flex h-[538px]">
        <SideBar />
        <div className="flex min-w-0 flex-1 flex-col">
          <TabStrip />
          <AddressBar />
          <Bookmarks />
          <div className="mt-[2px] flex">
            <ForumPage />
            <ScrollBar />
          </div>
        </div>
      </div>
      <TaskBar />
      <Explorer />
    </div>
  );
}
